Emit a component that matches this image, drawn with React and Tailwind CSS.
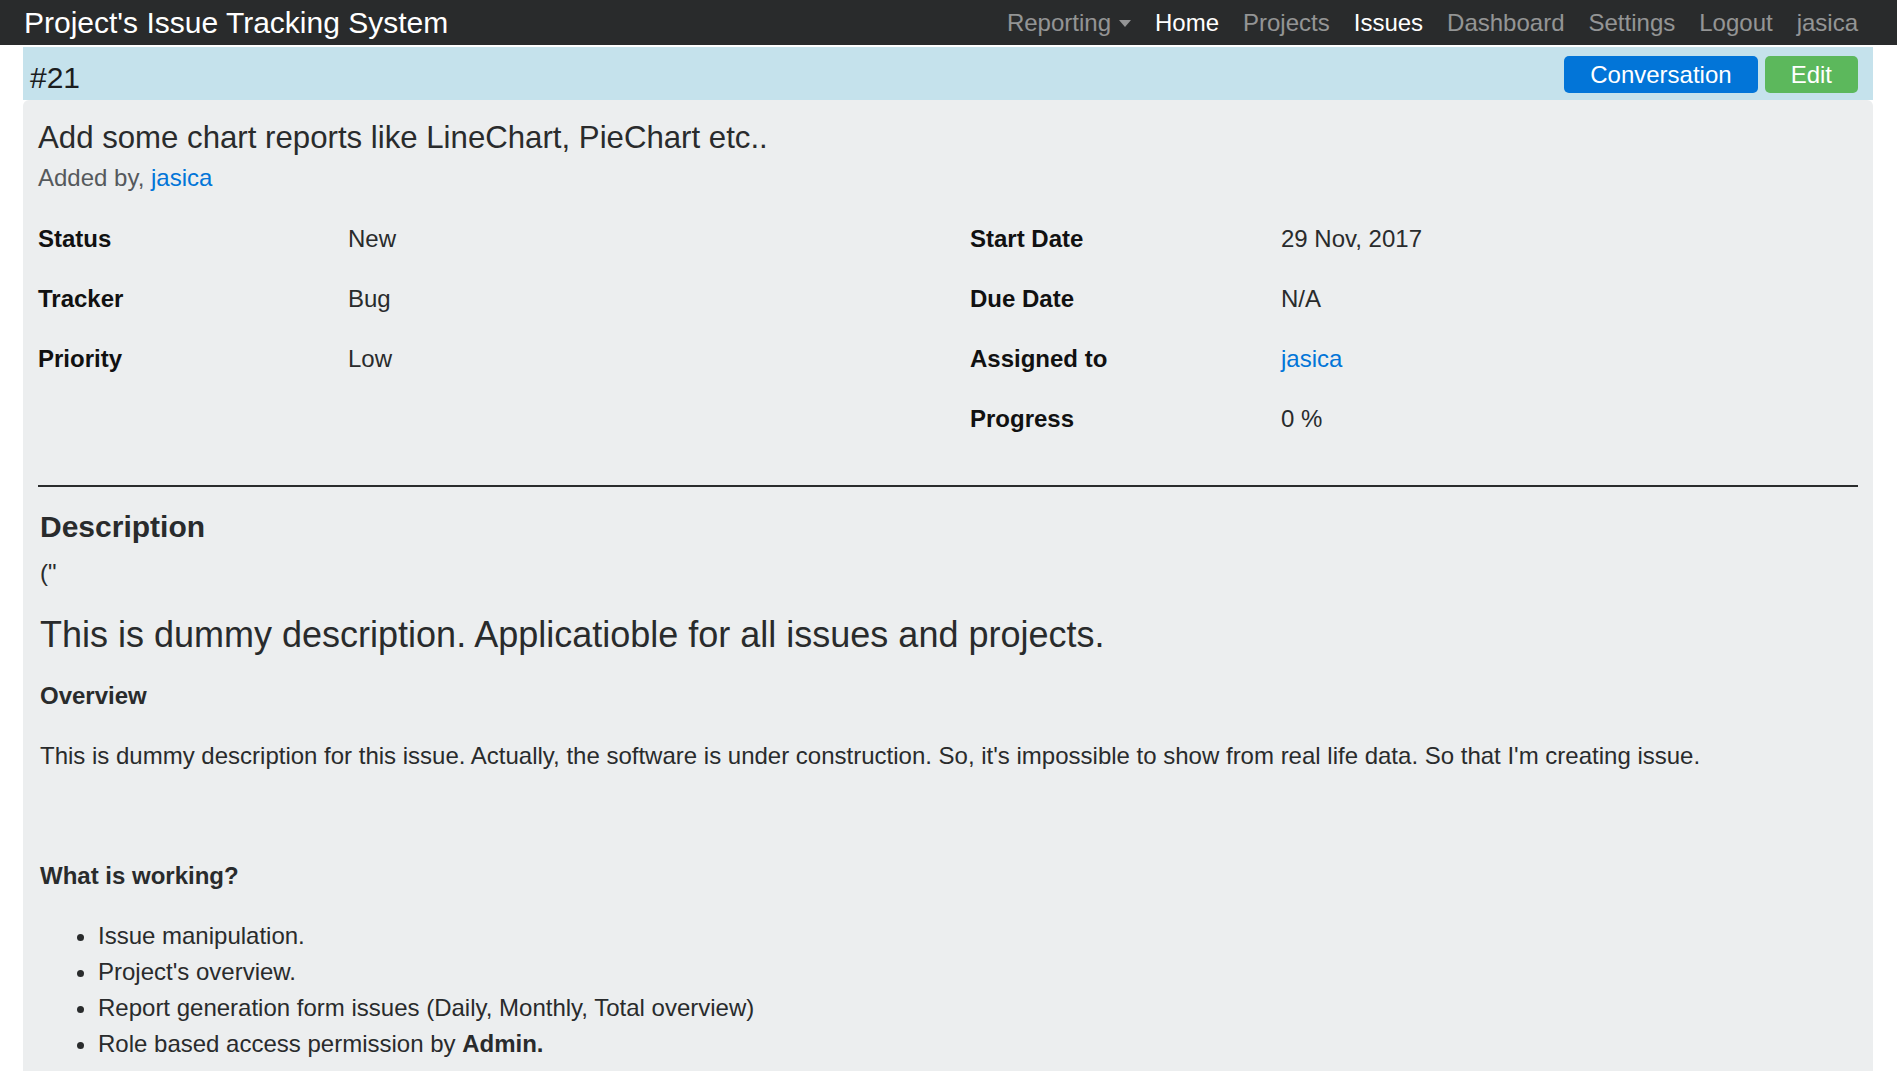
import React from "react";

const rowsLeft = [
  ["Status", "New"],
  ["Tracker", "Bug"],
  ["Priority", "Low"],
  ["", ""],
];
const rowsRight = [
  ["Start Date", "29 Nov, 2017", false],
  ["Due Date", "N/A", false],
  ["Assigned to", "jasica", true],
  ["Progress", "0 %", false],
];

function NavLink({ children, active }) {
  return (
    <li className={"px-[12px] flex items-center " + (active ? "text-white" : "text-white/50")}>
      {children}
    </li>
  );
}

export default function App() {
  return (
    <div className="min-h-screen bg-white font-['Liberation_Sans',Arial,sans-serif] text-[#292b2c]">
      <nav className="h-[45px] bg-[#292b2c] flex items-center justify-between pl-[24px] pr-[27px]">
        <span className="text-[30px] leading-[36px] text-white">Project's Issue Tracking System</span>
        <ul className="flex items-center text-[24px] leading-[36px]">
          <NavLink>
            Reporting
            <span className="ml-[8px] mt-[2px] inline-block w-0 h-0 border-t-[7px] border-t-current border-x-[6px] border-x-transparent" />
          </NavLink>
          <NavLink active>Home</NavLink>
          <NavLink>Projects</NavLink>
          <NavLink active>Issues</NavLink>
          <NavLink>Dashboard</NavLink>
          <NavLink>Settings</NavLink>
          <NavLink>Logout</NavLink>
          <NavLink>jasica</NavLink>
        </ul>
      </nav>

      <div className="ml-[23px] mr-[24px] mt-[2px]">
        <div className="h-[53px] bg-[#c5e2ec] flex items-center justify-between pl-[7px] pr-[15px]">
          <span className="text-[30px] leading-[36px] pt-[9px] text-[#1b1d1e]">#21</span>
          <div className="flex items-center gap-[7px] pt-[2px]">
            <button className="h-[37px] px-[26px] rounded-[5px] bg-[#0275d8] text-white text-[24px] leading-none">
              Conversation
            </button>
            <button className="h-[37px] px-[26px] rounded-[5px] bg-[#5cb85c] text-white text-[24px] leading-none">
              Edit
            </button>
          </div>
        </div>

        <div className="bg-[#eceeef] rounded-t-[6px] px-[15px] pt-[20px] pb-[30px]">
          <h4 className="text-[31.2px] leading-[36px] text-[#292b2c]">
            Add some chart reports like LineChart, PieChart etc..
          </h4>
          <p className="mt-[4px] text-[24px] leading-[36px] text-[#55595c]">
            Added by, <a className="text-[#0275d8]">jasica</a>
          </p>

          <div className="mt-[13px] grid grid-cols-[310px_622px_311px_1fr] text-[24px] leading-[36px]">
            {rowsLeft.map((l, i) => {
              const r = rowsRight[i];
              return (
                <React.Fragment key={i}>
                  <div className="h-[60px] flex items-center font-bold text-[#111]">{l[0]}</div>
                  <div className="h-[60px] flex items-center">{l[1]}</div>
                  <div className="h-[60px] flex items-center font-bold text-[#111]">{r[0]}</div>
                  <div className={"h-[60px] flex items-center " + (r[2] ? "text-[#0275d8]" : "")}>{r[1]}</div>
                </React.Fragment>
              );
            })}
          </div>

          <div className="mt-[36px] h-[2px] bg-[#2a2c2d]" />

          <div className="pl-[2px]">
            <h5 className="mt-[22px] text-[30px] leading-[36px] font-bold text-[#292b2c]">Description</h5>
            <p className="mt-[10px] text-[24px] leading-[36px]">("</p>
            <h4 className="mt-[22px] text-[36px] leading-[43px]">
              This is dummy description. Applicatioble for all issues and projects.
            </h4>
            <h6 className="mt-[22px] text-[24px] leading-[36px] font-bold">Overview</h6>
            <p className="mt-[24px] text-[24px] leading-[36px]">
              This is dummy description for this issue. Actually, the software is under construction. So, it's impossible to show from real life data. So that I'm creating issue.
            </p>
            <h6 className="mt-[84px] text-[24px] leading-[36px] font-bold">What is working?</h6>
            <ul className="mt-[24px] list-disc pl-[58px] text-[24px] leading-[36px]">
              <li>Issue manipulation.</li>
              <li>Project's overview.</li>
              <li>Report generation form issues (Daily, Monthly, Total overview)</li>
              <li>
                Role based access permission by <strong className="font-bold">Admin.</strong>
              </li>
            </ul>
          </div>
        </div>
      </div>
    </div>
  );
}
